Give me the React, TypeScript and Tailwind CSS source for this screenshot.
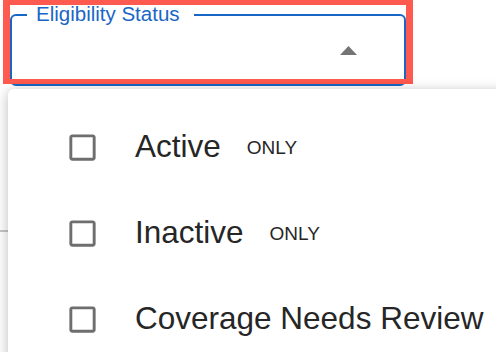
import { useState } from "react";

type Option = { id: string; label: string; only?: boolean };

const options: Option[] = [
  { id: "active", label: "Active", only: true },
  { id: "inactive", label: "Inactive", only: true },
  { id: "review", label: "Coverage Needs Review" },
];

function CheckIcon({ checked }: { checked: boolean }) {
  return (
    <svg width="35" height="35" viewBox="0 0 24 24" className="shrink-0 fill-[#6e6e6e]">
      {checked ? (
        <path d="M19 3H5c-1.11 0-2 .9-2 2v14c0 1.1.89 2 2 2h14c1.11 0 2-.9 2-2V5c0-1.1-.89-2-2-2zm-9 14l-5-5 1.41-1.41L10 14.17l7.59-7.59L19 8l-9 9z" />
      ) : (
        <path d="M19 5v14H5V5h14m0-2H5c-1.11 0-2 .9-2 2v14c0 1.1.89 2 2 2h14c1.1 0 2-.9 2-2V5c0-1.1-.9-2-2-2z" />
      )}
    </svg>
  );
}

export default function App() {
  const [checked, setChecked] = useState<Record<string, boolean>>({});

  return (
    <div className="relative w-[496px] h-[352px] overflow-hidden bg-white font-['Liberation_Sans',Arial,sans-serif]">
      {/* select field */}
      <div className="relative ml-[10px] mt-[14px] w-[396px] h-[72px] rounded-[6px] border-2 border-[#1866c6] bg-white">
        <span className="absolute left-[15px] top-[-12px] pl-[9px] pr-[14px] bg-white text-[20.5px] leading-none text-[#1866c6]">
          Eligibility Status
        </span>
        <div className="flex h-full items-center justify-end pr-[47px]">
          <svg width="17" height="9" viewBox="0 0 17 9">
            <polygon points="0,9 17,9 8.5,0" fill="#747474" />
          </svg>
        </div>
      </div>

      <div className="mt-[144px] h-[2px] w-full bg-[#c6c6c6]" />

      {/* highlight */}
      <div className="absolute left-[3px] top-0 w-[410px] h-[84px] border-x-[7px] border-b-[5px] border-t-[5px] border-[#ff5a4f]" />

      {/* menu */}
      <div className="absolute left-[8px] top-[89px] w-[520px] h-[300px] rounded-[6px] bg-white pt-[15px] shadow-[0_4px_14px_2px_rgba(0,0,0,0.16),0_0_8px_rgba(0,0,0,0.08)]">
        {options.map((o) => (
          <div
            key={o.id}
            onClick={() => setChecked((p) => ({ ...p, [o.id]: !p[o.id] }))}
            className="flex h-[86px] items-center pl-[57px] cursor-pointer"
          >
            <CheckIcon checked={!!checked[o.id]} />
            <span className="ml-[35px] text-[31.5px] leading-none text-[#262626]">{o.label}</span>
            {o.only && (
              <span className="ml-[26px] text-[19px] leading-none text-[#262626]">ONLY</span>
            )}
          </div>
        ))}
      </div>
    </div>
  );
}
